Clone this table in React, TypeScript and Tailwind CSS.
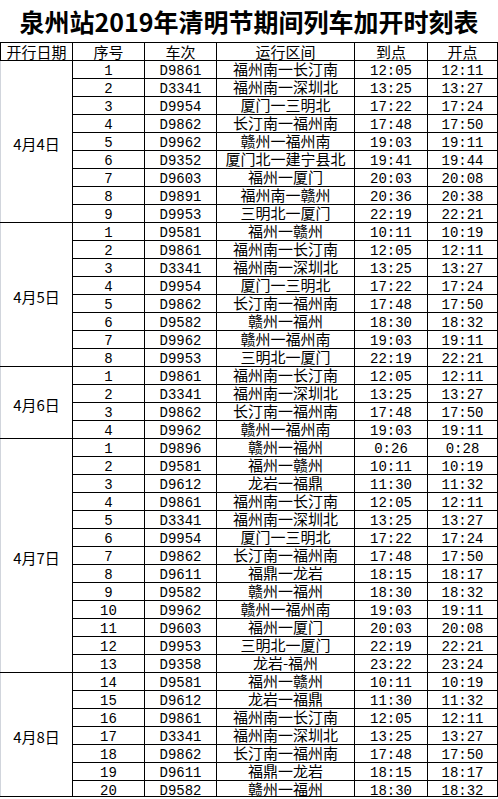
type Row = [string, string, string, string, string]

const groups: { date: string; rows: Row[] }[] = [
  {
    date: '4月4日',
    rows: [
      ['1', 'D9861', '福州南一长汀南', '12:05', '12:11'],
      ['2', 'D3341', '福州南一深圳北', '13:25', '13:27'],
      ['3', 'D9954', '厦门一三明北', '17:22', '17:24'],
      ['4', 'D9862', '长汀南一福州南', '17:48', '17:50'],
      ['5', 'D9962', '赣州一福州南', '19:03', '19:11'],
      ['6', 'D9352', '厦门北一建宁县北', '19:41', '19:44'],
      ['7', 'D9603', '福州一厦门', '20:03', '20:08'],
      ['8', 'D9891', '福州南一赣州', '20:36', '20:38'],
      ['9', 'D9953', '三明北一厦门', '22:19', '22:21'],
    ],
  },
  {
    date: '4月5日',
    rows: [
      ['1', 'D9581', '福州一赣州', '10:11', '10:19'],
      ['2', 'D9861', '福州南一长汀南', '12:05', '12:11'],
      ['3', 'D3341', '福州南一深圳北', '13:25', '13:27'],
      ['4', 'D9954', '厦门一三明北', '17:22', '17:24'],
      ['5', 'D9862', '长汀南一福州南', '17:48', '17:50'],
      ['6', 'D9582', '赣州一福州', '18:30', '18:32'],
      ['7', 'D9962', '赣州一福州南', '19:03', '19:11'],
      ['8', 'D9953', '三明北一厦门', '22:19', '22:21'],
    ],
  },
  {
    date: '4月6日',
    rows: [
      ['1', 'D9861', '福州南一长汀南', '12:05', '12:11'],
      ['2', 'D3341', '福州南一深圳北', '13:25', '13:27'],
      ['3', 'D9862', '长汀南一福州南', '17:48', '17:50'],
      ['4', 'D9962', '赣州一福州南', '19:03', '19:11'],
    ],
  },
  {
    date: '4月7日',
    rows: [
      ['1', 'D9896', '赣州一福州', '0:26', '0:28'],
      ['2', 'D9581', '福州一赣州', '10:11', '10:19'],
      ['3', 'D9612', '龙岩一福鼎', '11:30', '11:32'],
      ['4', 'D9861', '福州南一长汀南', '12:05', '12:11'],
      ['5', 'D3341', '福州南一深圳北', '13:25', '13:27'],
      ['6', 'D9954', '厦门一三明北', '17:22', '17:24'],
      ['7', 'D9862', '长汀南一福州南', '17:48', '17:50'],
      ['8', 'D9611', '福鼎一龙岩', '18:15', '18:17'],
      ['9', 'D9582', '赣州一福州', '18:30', '18:32'],
      ['10', 'D9962', '赣州一福州南', '19:03', '19:11'],
      ['11', 'D9603', '福州一厦门', '20:03', '20:08'],
      ['12', 'D9953', '三明北一厦门', '22:19', '22:21'],
      ['13', 'D9358', '龙岩-福州', '23:22', '23:24'],
    ],
  },
  {
    date: '4月8日',
    rows: [
      ['14', 'D9581', '福州一赣州', '10:11', '10:19'],
      ['15', 'D9612', '龙岩一福鼎', '11:30', '11:32'],
      ['16', 'D9861', '福州南一长汀南', '12:05', '12:11'],
      ['17', 'D3341', '福州南一深圳北', '13:25', '13:27'],
      ['18', 'D9862', '长汀南一福州南', '17:48', '17:50'],
      ['19', 'D9611', '福鼎一龙岩', '18:15', '18:17'],
      ['20', 'D9582', '赣州一福州', '18:30', '18:32'],
    ],
  },
]

const td = 'border border-black p-0 text-center align-top'
const mono = 'font-["Liberation_Mono","Noto_Sans_CJK_SC",monospace] text-[14px] pt-[3px] leading-[14px]'
const cjk = 'font-["Noto_Sans_CJK_SC",sans-serif] text-[15px] leading-[16px]'

function Cell({ text, font, last }: { text: string; font: string; last: boolean }) {
  return (
    <td className={td}>
      <div className={`${last ? 'h-[15px]' : 'h-[17px]'} whitespace-nowrap ${font}`}>{text}</div>
    </td>
  )
}

export default function App() {
  return (
    <div className="w-[498px] h-[799px] bg-white text-black overflow-hidden">
      <div className='h-[42px] flex items-center justify-center font-["Noto_Sans_CJK_SC",sans-serif] font-bold text-[25px] leading-none'>
        泉州站2019年清明节期间列车加开时刻表
      </div>
      <table className="table-fixed border-collapse w-[497px]">
        <colgroup>
          <col className="w-[72px]" />
          <col className="w-[72px]" />
          <col className="w-[72px]" />
          <col className="w-[138px]" />
          <col className="w-[73px]" />
          <col className="w-[70px]" />
        </colgroup>
        <thead>
          <tr>
            {['开行日期', '序号', '车次', '运行区间', '到点', '开点'].map((h) => (
              <th key={h} className="border border-black p-0 font-normal text-center align-top">
                <div className='h-[17px] whitespace-nowrap font-["Noto_Sans_CJK_SC",sans-serif] text-[15px] leading-[17px]'>
                  {h}
                </div>
              </th>
            ))}
          </tr>
        </thead>
        <tbody>
          {groups.map((g, gi) =>
            g.rows.map((r, i) => {
              const last = gi === groups.length - 1 && i === g.rows.length - 1
              return (
                <tr key={g.date + i}>
                  {i === 0 && (
                    <td
                      rowSpan={g.rows.length}
                      className='border border-black border-l-gray-300 p-0 pt-[3px] text-center align-middle leading-[15px] font-["Noto_Sans_CJK_SC",sans-serif] text-[15px]'
                    >
                      {g.date}
                    </td>
                  )}
                  <Cell text={r[0]} font={mono} last={last} />
                  <Cell text={r[1]} font={mono} last={last} />
                  <Cell text={r[2]} font={cjk} last={last} />
                  <Cell text={r[3]} font={mono} last={last} />
                  <Cell text={r[4]} font={mono} last={last} />
                </tr>
              )
            })
          )}
        </tbody>
      </table>
    </div>
  )
}
